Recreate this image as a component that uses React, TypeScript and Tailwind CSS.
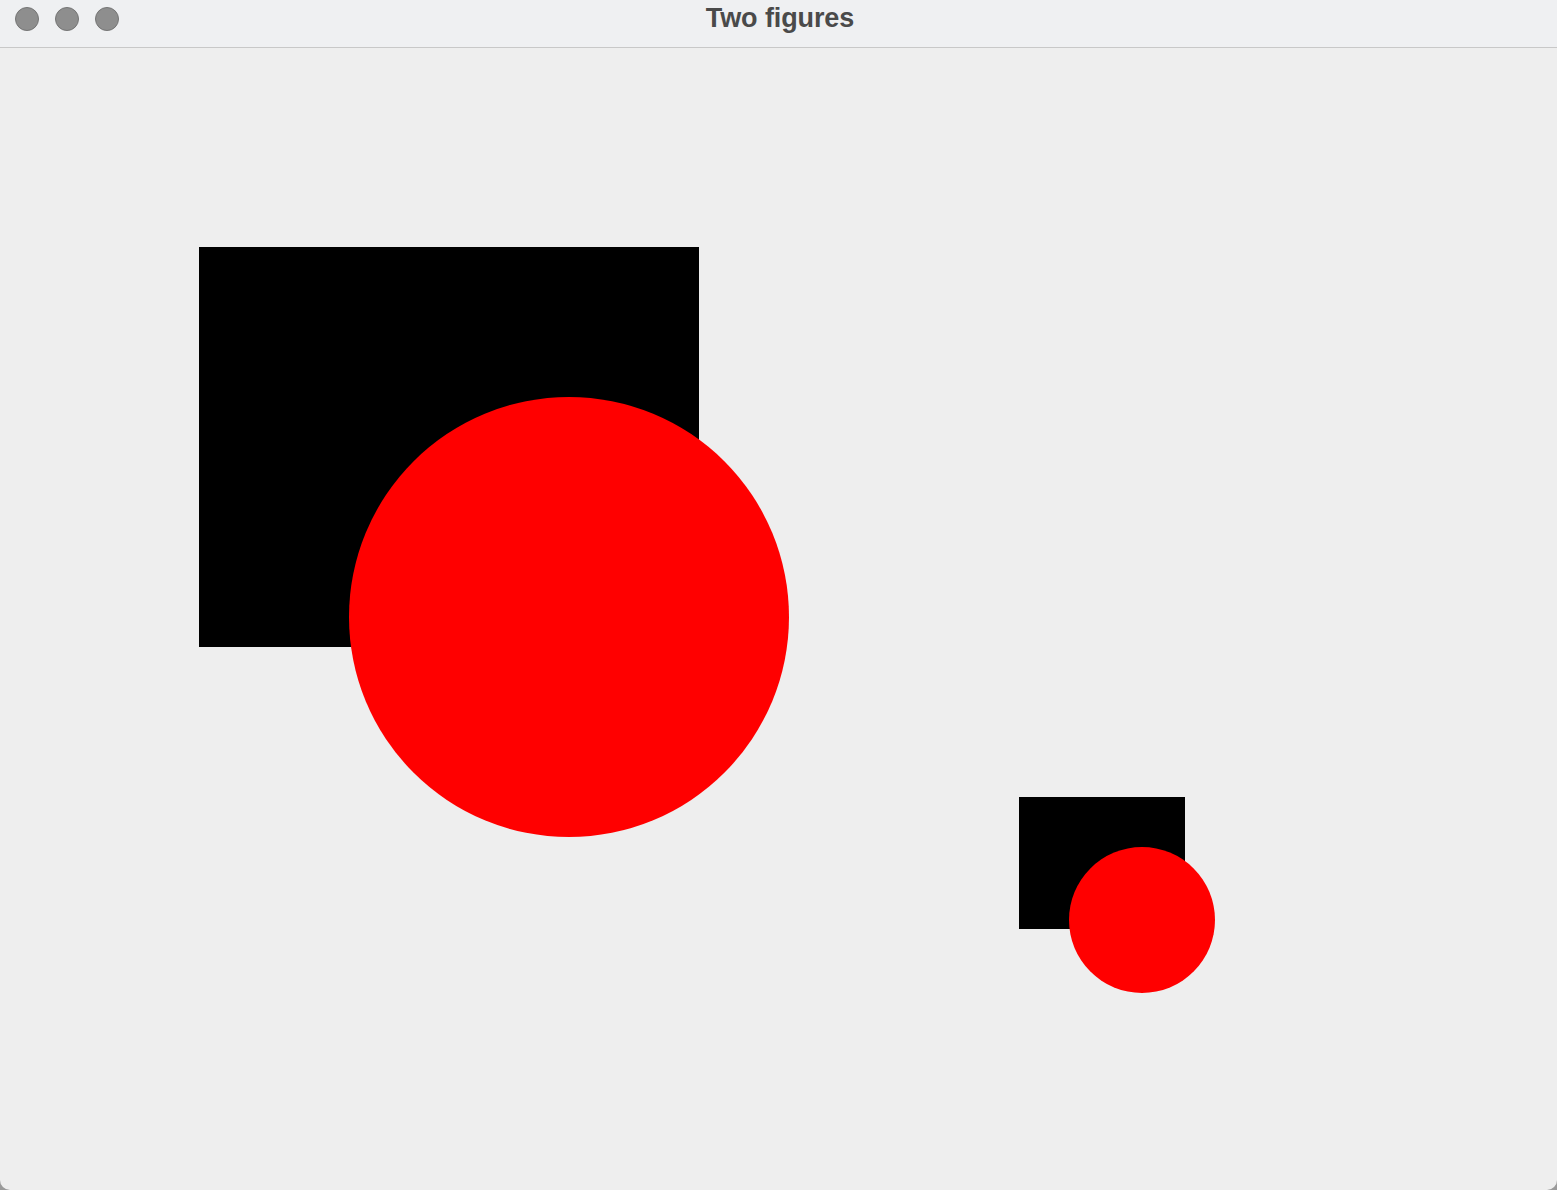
const TrafficLight = () => (
  <div className="h-6 w-6 rounded-full bg-[#8e8e8e] border border-[#757575]" />
);

export default function App() {
  return (
    <div className="h-[1190px] w-[1557px] bg-[#9a9a9a] font-['Liberation_Sans',Arial,sans-serif]">
      <div className="flex h-full w-full flex-col overflow-hidden rounded-b-[10px] bg-[#eeeeee]">
        {/* Title bar */}
        <div className="relative flex h-[48px] shrink-0 items-start border-b border-[#c8c8c8] bg-[#eff0f2]">
          <div className="flex items-center gap-4 pl-[15px] pt-[7px]">
            <TrafficLight />
            <TrafficLight />
            <TrafficLight />
          </div>
          <div className="absolute inset-x-0 top-0 flex justify-center pl-[3px] pt-[2px]">
            <span className="text-[27px] leading-[32px] font-bold tracking-[-0.1px] text-[#4a4a4a]">Two figures</span>
          </div>
        </div>

        {/* Canvas */}
        <div className="flex-1">
          <svg width="1557" height="1142" viewBox="0 48 1557 1142">
            <rect x="199" y="247" width="500" height="400" fill="#000000" />
            <circle cx="569" cy="617" r="220" fill="#ff0000" />
            <rect x="1019" y="797" width="166" height="132" fill="#000000" />
            <circle cx="1142" cy="920" r="73" fill="#ff0000" />
          </svg>
        </div>
      </div>
    </div>
  );
}
